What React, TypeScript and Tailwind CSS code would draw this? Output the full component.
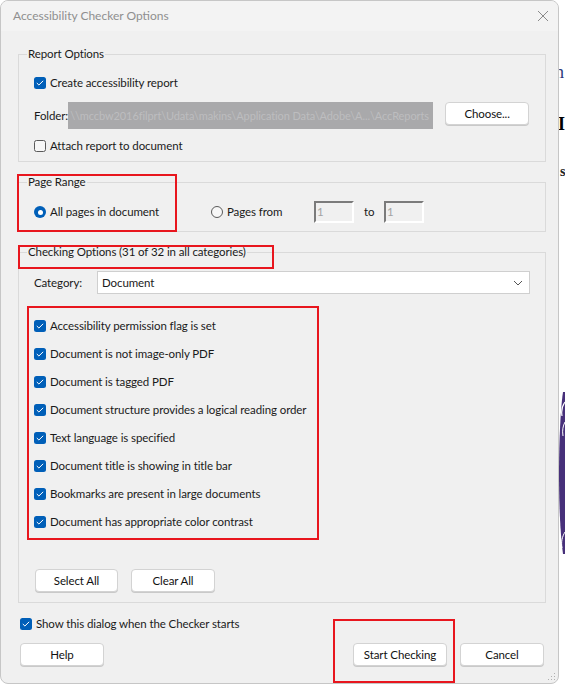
import React from "react";

function Check({ checked }: { checked: boolean }) {
  if (checked) {
    return (
      <span className="w-[12px] h-[12px] rounded-[2.5px] bg-[#005fb8] flex items-center justify-center shrink-0">
        <svg width="8" height="6" viewBox="0 0 8 6">
          <path d="M0.8 3 L2.9 5 L7.2 0.8" fill="none" stroke="#ffffff" strokeWidth="1" />
        </svg>
      </span>
    );
  }
  return <span className="w-[12px] h-[12px] rounded-[2.5px] border border-[#5a5a5a] bg-[#f7f7f7] shrink-0" />;
}

function Radio({ checked }: { checked: boolean }) {
  if (checked) {
    return (
      <span className="w-[12px] h-[12px] rounded-full bg-[#005fb8] flex items-center justify-center shrink-0">
        <span className="w-[5px] h-[5px] rounded-full bg-white" />
      </span>
    );
  }
  return <span className="w-[12px] h-[12px] rounded-full border border-[#5a5a5a] bg-[#f7f7f7] shrink-0" />;
}

function Btn({ label, w }: { label: string; w: string }) {
  return (
    <div className={`${w} h-[23px] bg-white border border-[#d3d3d3] rounded-[4px] flex items-center justify-center text-[#111] shadow-[0_1px_0_#c9c9c9]`}>
      {label}
    </div>
  );
}

function Row({ checked, label }: { checked: boolean; label: string }) {
  return (
    <div className="flex items-center h-4 gap-[4px]">
      <Check checked={checked} />
      <span>{label}</span>
    </div>
  );
}

const items = [
  "Accessibility permission flag is set",
  "Document is not image-only PDF",
  "Document is tagged PDF",
  "Document structure provides a logical reading order",
  "Text language is specified",
  "Document title is showing in title bar",
  "Bookmarks are present in large documents",
  "Document has appropriate color contrast",
];

function RedBox({ cls }: { cls: string }) {
  return <div className={`absolute border-2 border-[#e8161e] pointer-events-none ${cls}`} />;
}

export default function App() {
  return (
    <div className="w-[565px] h-[685px] bg-white flex font-['Lato',sans-serif] text-[11.5px] tracking-[-0.1px] leading-4 text-[#1a1a1a] overflow-hidden">
      <div className="relative w-[559px] h-[684px] shrink-0 border border-[#c6c6c6] rounded-[8px] overflow-hidden bg-[#f0f0f0] flex flex-col">
        {/* title bar */}
        <div className="h-[30px] bg-[#f3f3f3] flex items-center justify-between pl-[12px] pr-[8px]">
          <span className="text-[#8f8f8f] text-[12px] tracking-normal">Accessibility Checker Options</span>
          <svg width="12" height="12" viewBox="0 0 12 12" className="mr-[1px]">
            <path d="M1 1 L11 11 M11 1 L1 11" stroke="#8a8a8a" strokeWidth="1" />
          </svg>
        </div>

        {/* Report Options */}
        <fieldset className="mt-[15px] ml-[17px] w-[528px] border border-[#dadada] pl-[15px] pr-[15px] pt-[13px] pb-[7px] flex flex-col">
          <legend className="-ml-[7px] px-[1px] leading-4">Report Options</legend>
          <Row checked={true} label="Create accessibility report" />
          <div className="flex items-center mt-[11px]">
            <span className="shrink-0">Folder:</span>
            <div className="w-[365px] h-[27px] bg-[#a9a9ab] flex items-center pl-[2px] overflow-hidden whitespace-nowrap text-[#bdbdbf] text-[11px]">
              \\mccbw2016filprt\Udata\makins\Application Data\Adobe\A...\AccReports
            </div>
            <div className="ml-[12px] -mt-[4px]">
              <Btn label="Choose..." w="w-[84px]" />
            </div>
          </div>
          <div className="mt-[9px]">
            <Row checked={false} label="Attach report to document" />
          </div>
        </fieldset>

        {/* Page Range */}
        <fieldset className="mt-[12px] ml-[17px] w-[528px] border border-[#dadada] pl-[15px] pt-[11px] pb-[8px]">
          <legend className="-ml-[7px] px-[1px] leading-4">Page Range</legend>
          <div className="flex items-center h-[22px]">
            <div className="w-[177px] flex items-center gap-[4px]">
              <Radio checked={true} />
              <span>All pages in document</span>
            </div>
            <div className="w-[103px] flex items-center gap-[4px]">
              <Radio checked={false} />
              <span>Pages from</span>
            </div>
            <div className="w-[40px] h-[22px] border-[2px] border-t-[#7b7b7b] border-l-[#7b7b7b] border-b-white border-r-white bg-[#f0f0f0] text-[#a3a3a3] pl-[1px] leading-[18px]">1</div>
            <span className="ml-[10px] w-[20px]">to</span>
            <div className="w-[40px] h-[22px] border-[2px] border-t-[#7b7b7b] border-l-[#7b7b7b] border-b-white border-r-white bg-[#f0f0f0] text-[#a3a3a3] pl-[1px] leading-[18px]">1</div>
          </div>
        </fieldset>

        {/* Checking Options */}
        <fieldset className="mt-[12px] ml-[17px] w-[528px] border border-[#dadada] pl-[15px] pr-[15px] pt-[11px] pb-[10px] flex flex-col">
          <legend className="-ml-[7px] px-[1px] leading-4">Checking Options (31 of 32 in all categories)</legend>
          <div className="flex items-center">
            <span className="w-[63px]">Category:</span>
            <div className="flex-1 h-[23px] bg-white border border-[#cfcfcf] flex items-center justify-between pl-[4px] pr-[6px]">
              <span>Document</span>
              <svg width="10" height="6" viewBox="0 0 10 6">
                <path d="M1 1 L5 5 L9 1" fill="none" stroke="#555555" strokeWidth="1" />
              </svg>
            </div>
          </div>
          <div className="mt-[24px] flex flex-col gap-[12px]">
            {items.map((t) => (
              <Row key={t} checked={true} label={t} />
            ))}
          </div>
          <div className="mt-[39px] ml-[1px] flex gap-[13px]">
            <Btn label="Select All" w="w-[83px]" />
            <Btn label="Clear All" w="w-[84px]" />
          </div>
        </fieldset>

        <div className="mt-[13px] ml-[19px]">
          <Row checked={true} label="Show this dialog when the Checker starts" />
        </div>

        <div className="mt-[11px] ml-[19px] mr-[14px] flex items-center">
          <Btn label="Help" w="w-[84px]" />
          <div className="flex-1" />
          <Btn label="Start Checking" w="w-[94px]" />
          <div className="w-[13px]" />
          <Btn label="Cancel" w="w-[84px]" />
        </div>

        {/* resize grip */}
        <svg className="absolute right-[2px] bottom-[2px]" width="8" height="8" viewBox="0 0 8 8">
          <rect x="6" y="0" width="1" height="1" fill="#b0b0b0" />
          <rect x="3" y="3" width="1" height="1" fill="#b0b0b0" />
          <rect x="6" y="3" width="1" height="1" fill="#b0b0b0" />
          <rect x="0" y="6" width="1" height="1" fill="#b0b0b0" />
          <rect x="3" y="6" width="1" height="1" fill="#b0b0b0" />
          <rect x="6" y="6" width="1" height="1" fill="#b0b0b0" />
        </svg>

        <RedBox cls="left-[16px] top-[173px] w-[160px] h-[58px]" />
        <RedBox cls="left-[17px] top-[244px] w-[256px] h-[24px]" />
        <RedBox cls="left-[26px] top-[305px] w-[292px] h-[234px]" />
        <RedBox cls="left-[332px] top-[618px] w-[122px] h-[64px]" />
      </div>

      {/* document behind the dialog */}
      <div className="w-[6px] h-[685px] overflow-hidden flex flex-col font-['Liberation_Serif',serif] relative">
        <span className="mt-[62px] -ml-[4px] text-[18px] leading-[20px] text-[#2b3a7a]">h</span>
        <span className="mt-[32px] -ml-[1px] text-[18px] leading-[20px] font-bold text-black">I</span>
        <span className="mt-[30px] ml-[1px] text-[14px] leading-[16px] font-bold text-[#222]">s</span>
        <svg className="mt-[212px]" width="6" height="162" viewBox="0 0 6 162">
          <path d="M4 0 C1 20 0 60 0 80 C0 110 1 140 4 162 L6 162 L6 0 Z" fill="#47307a" />
          <path d="M6 10 C3 14 2 18 3 24" stroke="#ffffff" strokeWidth="1.2" fill="none" />
          <path d="M6 30 C4 34 3 38 4 44" stroke="#ffffff" strokeWidth="1" fill="none" />
          <path d="M6 140 C3 145 2 150 3 156" stroke="#ffffff" strokeWidth="1" fill="none" />
        </svg>
      </div>
    </div>
  );
}
